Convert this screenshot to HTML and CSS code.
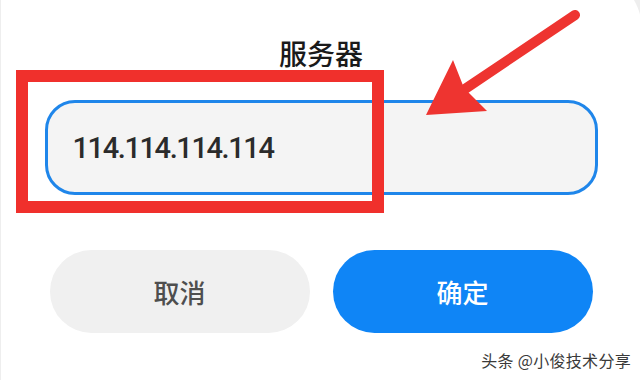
FILE: index.html
```html
<!DOCTYPE html>
<html lang="zh-CN">
<head>
<meta charset="utf-8">
<title>服务器</title>
<link rel="stylesheet" href="styles.css">
</head>
<body>
<div class="screen">
  <div class="dialog">
    <h1 class="title">服务器</h1>
    <div class="field"><span class="value">114.114.114.114</span></div>
    <div class="actions">
      <button class="btn btn-cancel">取消</button>
      <button class="btn btn-ok">确定</button>
    </div>
    <div class="watermark">头条 @小俊技术分享</div>
  </div>
  <div class="mark-box"></div>
  <svg class="arrow" width="640" height="380" viewBox="0 0 640 380">
    <line x1="575" y1="15" x2="462" y2="91" stroke="#ee3430" stroke-width="10" stroke-linecap="round"/>
    <polygon points="426,115 453,60 464,88 487,111" fill="#ee3430"/>
  </svg>
</div>
</body>
</html>
```

FILE: styles.css
```css
html, body {
  margin: 0;
  padding: 0;
}

body {
  width: 640px;
  height: 380px;
  overflow: hidden;
  background: #eeeeee;
  font-family: "Noto Sans CJK SC", "Noto Sans", sans-serif;
}

.screen {
  position: relative;
  width: 640px;
  height: 380px;
  overflow: hidden;
}

.dialog {
  margin: -30px -2px 0 1px;
  padding-top: 69px;
  height: 440px;
  box-sizing: border-box;
  background: #ffffff;
  border-radius: 20px 60px 0 0;
  display: flex;
  flex-direction: column;
  align-items: center;
}

.title {
  margin: 0;
  font-size: 28px;
  line-height: 28px;
  font-weight: 500;
  color: #1a1a1a;
  margin-left: -1px;
}

.field {
  margin-top: 33px;
  width: 553px;
  height: 95px;
  box-sizing: border-box;
  border: 3px solid #1f86ea;
  border-radius: 30px;
  background: #f4f4f4;
  display: flex;
  align-items: center;
  padding-left: 25px;
  margin-left: -1px;
}

.value {
  font-family: Roboto, "Noto Sans", sans-serif;
  font-weight: 500;
  font-size: 29px;
  letter-spacing: -1.4px;
  color: #2b2b2b;
}

.actions {
  margin-top: 55px;
  display: flex;
  gap: 23px;
  margin-left: -1px;
}

.btn {
  width: 260px;
  height: 83px;
  border: none;
  border-radius: 42px;
  font-family: "Noto Sans CJK SC", sans-serif;
  font-size: 26px;
  font-weight: 500;
  padding: 0;
}

.btn-cancel {
  background: #f0f0f0;
  color: #4e4e4e;
}

.btn-ok {
  background: #0f85f6;
  color: #ffffff;
}

.watermark {
  align-self: flex-end;
  margin-top: 18px;
  margin-right: 11px;
  font-size: 16px;
  line-height: 18px;
  letter-spacing: 0.3px;
  color: #3a3a3a;
  text-shadow: 0 0 2px #ffffff, 0 0 1px #ffffff;
}

.mark-box {
  position: absolute;
  left: 16px;
  top: 70px;
  width: 368px;
  height: 143px;
  box-sizing: border-box;
  border: 12px solid #f0302c;
}

.arrow {
  position: absolute;
  left: 0;
  top: 0;
}
```
